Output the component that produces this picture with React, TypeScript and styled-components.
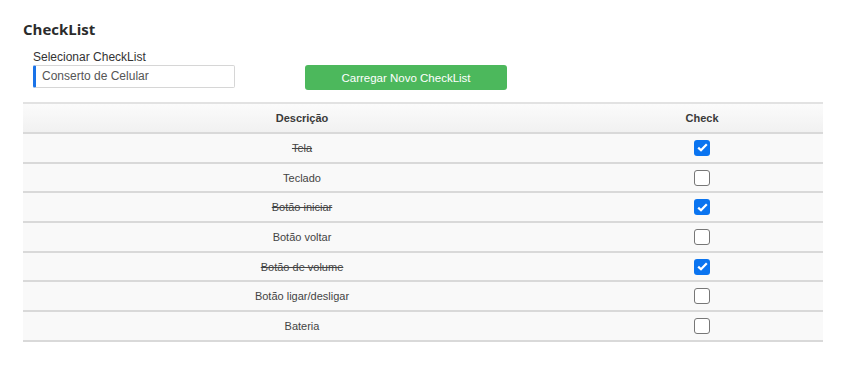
import { useState } from 'react';
import styled, { createGlobalStyle } from 'styled-components';

const GlobalStyle = createGlobalStyle`
  body {
    margin: 0;
    background: #fff;
    font-family: "Liberation Sans", Arial, sans-serif;
    color: #333;
  }
`;

const Page = styled.div`
  padding: 18px 43px 0 23px;
`;

const Title = styled.h2`
  margin: 0;
  font-family: "Open Sans", sans-serif;
  font-weight: 700;
  font-size: 15px;
  line-height: 22px;
  color: #2b2b2b;
`;

const FormRow = styled.div`
  display: flex;
  align-items: flex-end;
  margin: 10px 0 14px 10px;
`;

const Field = styled.div`
  display: flex;
  flex-direction: column;
`;

const Label = styled.label`
  font-size: 12px;
  line-height: 14px;
  color: #333;
  margin-bottom: 1px;
`;

const Select = styled.div`
  box-sizing: border-box;
  width: 202px;
  height: 23px;
  border: 1px solid #d6d6d6;
  border-left: 3px solid #1a73e8;
  border-radius: 2px;
  padding: 0 6px;
  font-size: 12px;
  line-height: 21px;
  color: #555;
`;

const LoadButton = styled.button`
  box-sizing: border-box;
  width: 202px;
  height: 25px;
  margin-left: 70px;
  margin-bottom: -2px;
  border: none;
  border-radius: 3px;
  background: #4cb85c;
  color: #fff;
  font-family: "Liberation Sans", Arial, sans-serif;
  font-size: 11.5px;
`;

const Table = styled.div`
  width: 800px;
  border-top: 2px solid #e2e2e2;
`;

const Row = styled.div<{ $head?: boolean }>`
  display: grid;
  grid-template-columns: 558px 242px;
  height: ${p => (p.$head ? '28px' : '27.7px')};
  align-items: center;
  background: ${p => (p.$head ? 'linear-gradient(#fbfbfb, #f1f1f1)' : '#f9f9f9')};
  border-bottom: 2px solid #d9d9d9;
  font-size: 11px;
  font-weight: ${p => (p.$head ? 700 : 400)};
  color: ${p => (p.$head ? '#3a3a3a' : '#444')};
`;

const Cell = styled.div<{ $done?: boolean }>`
  text-align: center;
  text-decoration: ${p => (p.$done ? 'line-through' : 'none')};
`;

const CheckCell = styled.div`
  display: flex;
  justify-content: center;
`;

const Box = styled.span<{ $on: boolean }>`
  box-sizing: border-box;
  width: 16px;
  height: 16px;
  border-radius: 3px;
  border: ${p => (p.$on ? 'none' : '1px solid #777')};
  background: ${p => (p.$on ? '#0a74f0' : '#fff')};
  display: flex;
  align-items: center;
  justify-content: center;
  cursor: pointer;
`;

const items = [
  { label: 'Tela', done: true },
  { label: 'Teclado', done: false },
  { label: 'Botão iniciar', done: true },
  { label: 'Botão voltar', done: false },
  { label: 'Botão de volume', done: true },
  { label: 'Botão ligar/desligar', done: false },
  { label: 'Bateria', done: false },
];

export default function App() {
  const [list, setList] = useState(items);

  const toggle = (i: number) =>
    setList(l => l.map((it, j) => (j === i ? { ...it, done: !it.done } : it)));

  return (
    <Page>
      <GlobalStyle />
      <Title>CheckList</Title>
      <FormRow>
        <Field>
          <Label>Selecionar CheckList</Label>
          <Select>Conserto de Celular</Select>
        </Field>
        <LoadButton>Carregar Novo CheckList</LoadButton>
      </FormRow>
      <Table>
        <Row $head>
          <Cell>Descrição</Cell>
          <Cell>Check</Cell>
        </Row>
        {list.map((it, i) => (
          <Row key={it.label}>
            <Cell $done={it.done}>{it.label}</Cell>
            <CheckCell>
              <Box $on={it.done} onClick={() => toggle(i)}>
                {it.done && (
                  <svg width="11" height="9" viewBox="0 0 11 9">
                    <path d="M1.2 4.6 L4 7.3 L9.8 1.2" fill="none" stroke="#fff" strokeWidth="2.2" />
                  </svg>
                )}
              </Box>
            </CheckCell>
          </Row>
        ))}
      </Table>
    </Page>
  );
}
